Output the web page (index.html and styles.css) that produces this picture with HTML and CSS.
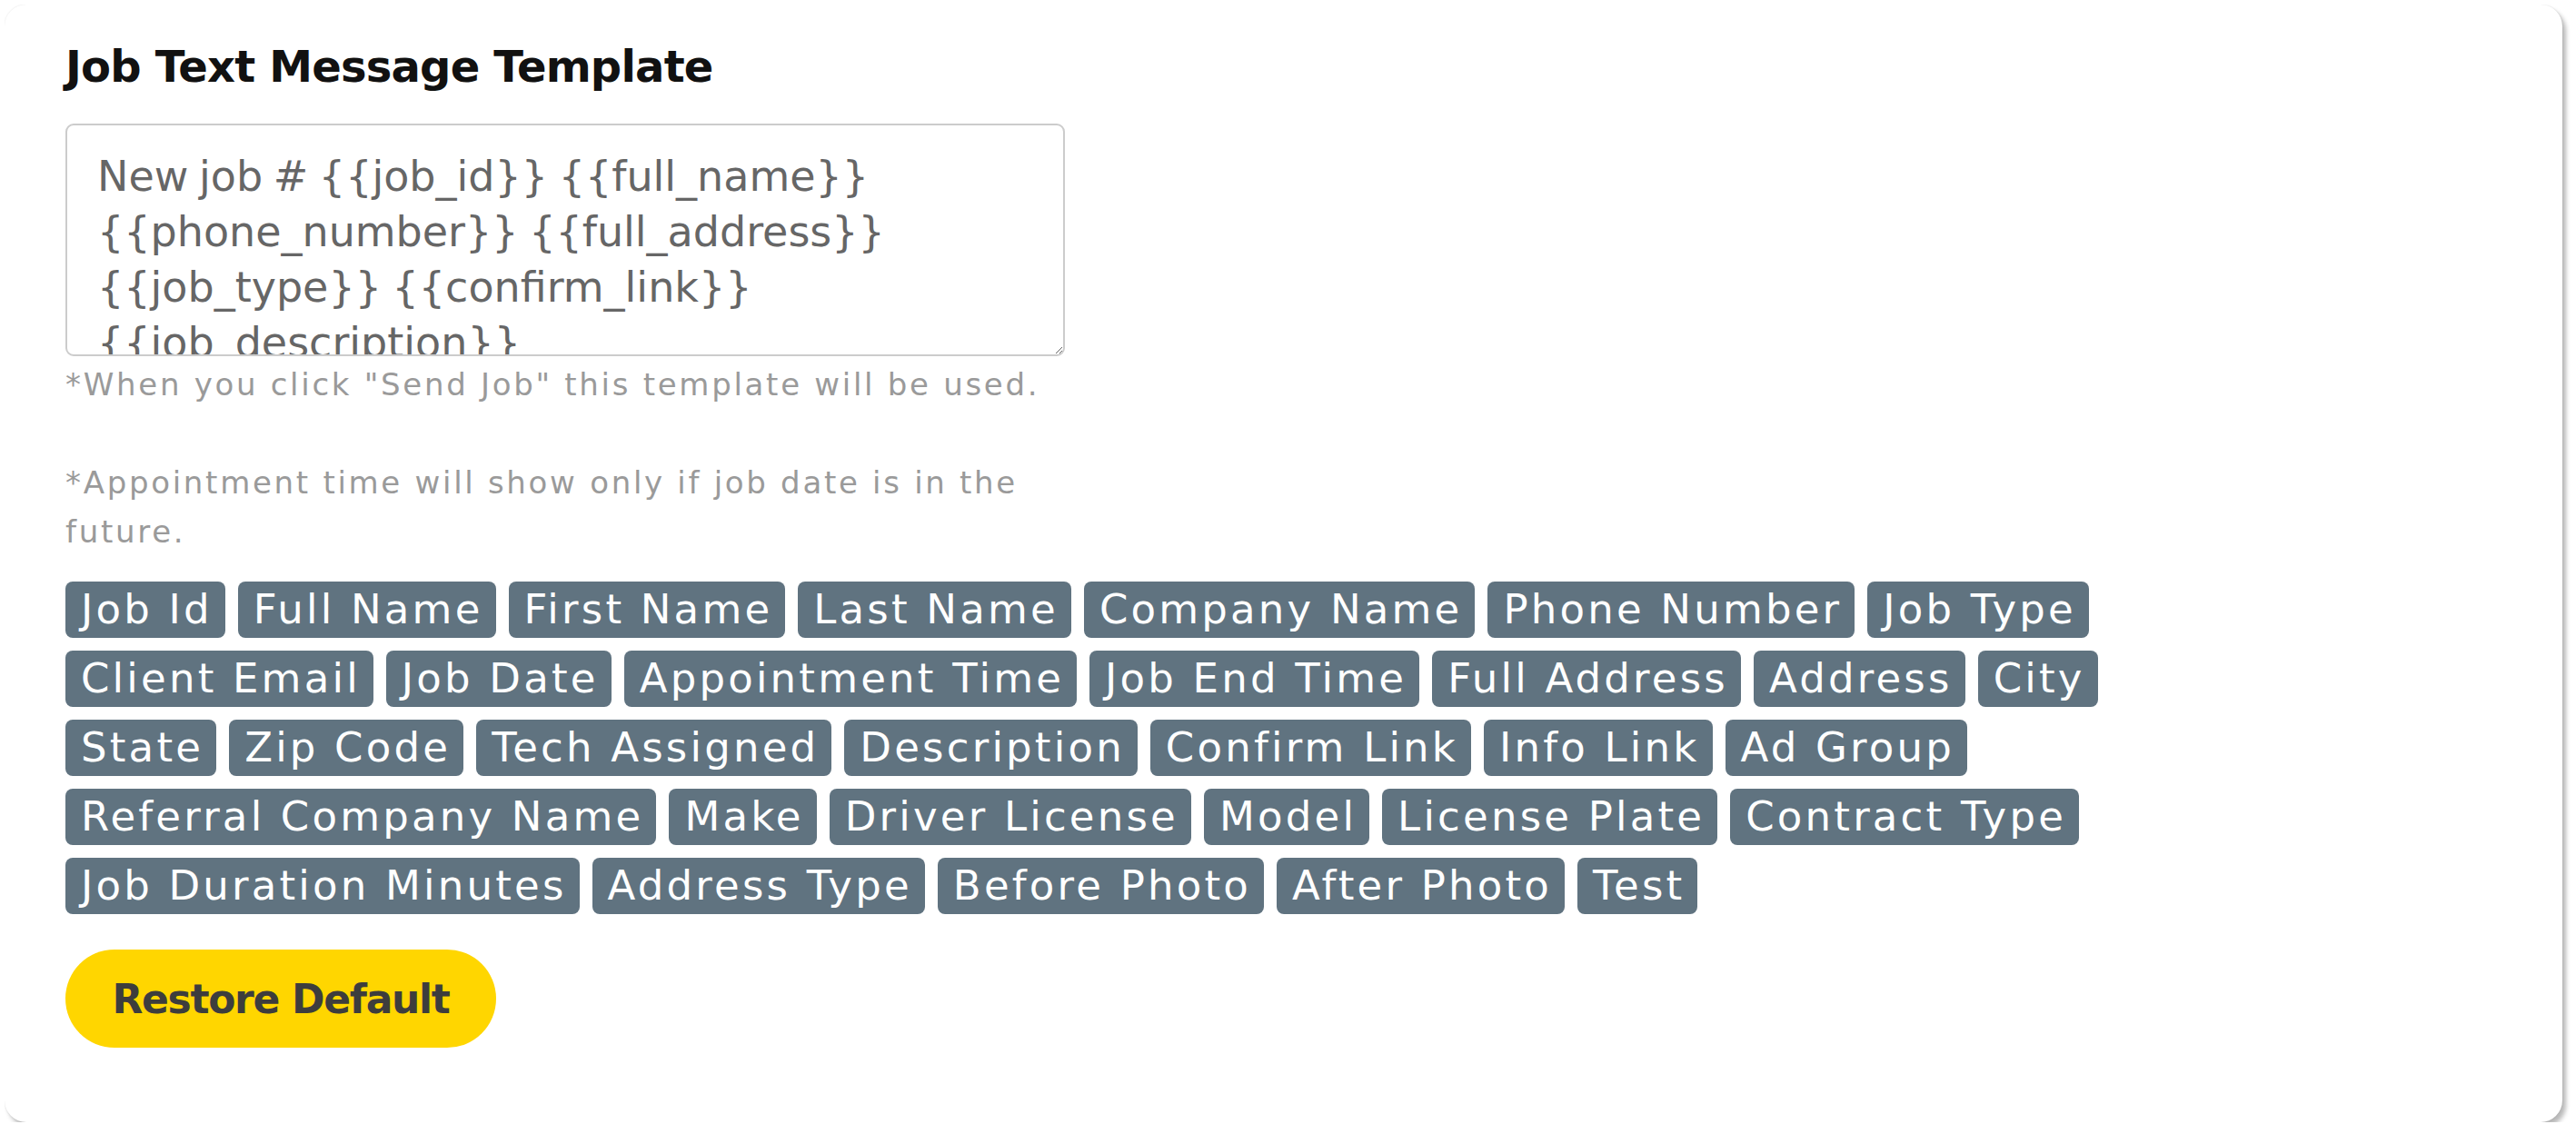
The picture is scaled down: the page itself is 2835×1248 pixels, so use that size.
FILE: index.html
```html
<!DOCTYPE html>
<html lang="en">
<head>
    <meta charset="UTF-8">
    <meta name="viewport" content="width=device-width, initial-scale=1.0">
    <title>Job Text Message Template</title>
    <link rel="stylesheet" href="styles.css">
</head>
<body>
    <div class="card">
        <h2 class="card-title">Job Text Message Template</h2>
        <textarea class="template-input">New job # {{job_id}} {{full_name}} {{phone_number}} {{full_address}} {{job_type}} {{confirm_link}} {{job_description}}</textarea>
        <p class="hint">*When you click "Send Job" this template will be used.<br><br>*Appointment time will show only if job date is in the future.</p>
        <div class="tags">
            <span class="tag">Job Id</span>
            <span class="tag">Full Name</span>
            <span class="tag">First Name</span>
            <span class="tag">Last Name</span>
            <span class="tag">Company Name</span>
            <span class="tag">Phone Number</span>
            <span class="tag">Job Type</span>
            <span class="tag">Client Email</span>
            <span class="tag">Job Date</span>
            <span class="tag">Appointment Time</span>
            <span class="tag">Job End Time</span>
            <span class="tag">Full Address</span>
            <span class="tag">Address</span>
            <span class="tag">City</span>
            <span class="tag">State</span>
            <span class="tag">Zip Code</span>
            <span class="tag">Tech Assigned</span>
            <span class="tag">Description</span>
            <span class="tag">Confirm Link</span>
            <span class="tag">Info Link</span>
            <span class="tag">Ad Group</span>
            <span class="tag">Referral Company Name</span>
            <span class="tag">Make</span>
            <span class="tag">Driver License</span>
            <span class="tag">Model</span>
            <span class="tag">License Plate</span>
            <span class="tag">Contract Type</span>
            <span class="tag">Job Duration Minutes</span>
            <span class="tag">Address Type</span>
            <span class="tag">Before Photo</span>
            <span class="tag">After Photo</span>
            <span class="tag">Test</span>
        </div>
        <button class="button">Restore Default</button>
    </div>
</body>
</html>
```

FILE: styles.css
```css
body {
    margin: 5px;
    font-family: 'DejaVu Sans', sans-serif;
    background-color: #fff;
}
.card {
    width: 2815px;
    height: 1230px;
    box-sizing: border-box;
    background-color: #fff;
    border-radius: 24px;
    padding: 38px 67px 0;
    box-shadow: 4px 5px 5px rgba(0, 0, 0, 0.28), 0 0 2px rgba(0, 0, 0, 0.12);
}
.card-title {
    margin: 0 0 33px;
    font-size: 48px;
    font-weight: 700;
    line-height: 60px;
    letter-spacing: -0.8px;
    color: #111;
}
.template-input {
    display: block;
    width: 1100px;
    height: 256px;
    box-sizing: border-box;
    margin: 0;
    padding: 26px 33px 0;
    border: 2px solid #ccc;
    border-radius: 9px;
    font-family: 'DejaVu Sans', sans-serif;
    font-size: 46px;
    line-height: 61px;
    word-spacing: -3px;
    color: #666;
    resize: vertical;
    overflow: hidden;
}
.hint {
    width: 1100px;
    margin: 4px 0 28px;
    font-size: 34px;
    line-height: 54px;
    letter-spacing: 2.7px;
    color: #9a9a9a;
}
.tags {
    display: flex;
    flex-wrap: wrap;
    gap: 14px;
    max-width: 2330px;
    margin-bottom: 39px;
}
.tag {
    background-color: #607380;
    color: #fff;
    font-size: 45px;
    line-height: 62px;
    letter-spacing: 3.2px;
    padding: 0 14px 0 17px;
    border-radius: 8px;
}
.button {
    display: block;
    width: 474px;
    height: 108px;
    background-color: #ffd600;
    border: none;
    border-radius: 54px;
    font-family: 'DejaVu Sans', sans-serif;
    font-size: 44px;
    font-weight: 700;
    letter-spacing: -1.3px;
    color: #3d3d3d;
    cursor: pointer;
}
```
